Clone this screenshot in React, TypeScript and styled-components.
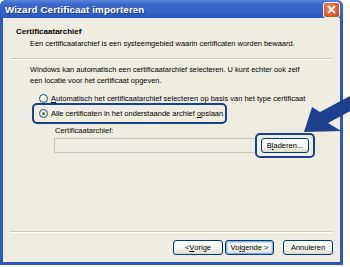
import React from "react";
import styled, { createGlobalStyle } from "styled-components";

const GlobalStyle = createGlobalStyle`
  html, body {
    margin: 0;
    padding: 0;
    background: #ffffff;
  }
  body {
    width: 350px;
    height: 267px;
    overflow: hidden;
    font-family: "Liberation Sans", Arial, sans-serif;
  }
`;

const Stage = styled.div`
  position: relative;
  width: 350px;
  height: 267px;
`;

const Window = styled.div`
  width: 343px;
  height: 265px;
  display: flex;
  flex-direction: column;
  background: #2d58bd;
  border-radius: 6px 6px 0 0;
  overflow: hidden;
`;

const TitleBar = styled.div`
  height: 18px;
  display: flex;
  align-items: center;
  justify-content: space-between;
  padding: 0 3px 0 5px;
  background: linear-gradient(#5a84dc 0%, #3c66c8 25%, #3560c4 70%, #2d58bb 100%);
`;

const Title = styled.span`
  color: #ffffff;
  font-weight: bold;
  font-size: 9.8px;
  letter-spacing: 0.1px;
  text-shadow: 1px 1px 0 #1e3f86;
`;

const CloseButton = styled.div`
  width: 15px;
  height: 14px;
  margin-top: 1px;
  border: 1px solid #ffffff;
  border-radius: 3px;
  background: radial-gradient(circle at 40% 35%, #f0895f 0%, #e05a2c 60%, #c8401c 100%);
  display: flex;
  align-items: center;
  justify-content: center;
`;

const Body = styled.div`
  flex: 1;
  margin: 0 3px 3px 3px;
  background: #efede2;
  display: flex;
  flex-direction: column;
`;

const Header = styled.div`
  height: 40px;
  padding: 9px 0 0 13px;
  box-sizing: border-box;
`;

const HeaderTitle = styled.div`
  font-weight: bold;
  font-size: 8px;
  line-height: 10px;
  color: #000;
`;

const HeaderSub = styled.div`
  font-size: 7.45px;
  line-height: 10px;
  margin: 2px 0 0 14px;
  color: #000;
`;

const Separator = styled.div<{ $inset: number }>`
  height: 1px;
  margin: 0 ${(p) => p.$inset}px;
  background: #d2cfc1;
  border-bottom: 1px solid #ffffff;
`;

const Content = styled.div`
  flex: 1;
  padding: 4px 0 0 27px;
  display: flex;
  flex-direction: column;
`;

const Paragraph = styled.div`
  font-size: 7.45px;
  line-height: 11px;
  color: #000;
`;

const Options = styled.div`
  margin: 7px 0 0 9px;
  display: flex;
  flex-direction: column;
  gap: 4px;
`;

const OptionRow = styled.div`
  display: flex;
  align-items: center;
  gap: 3px;
  height: 11px;
  font-size: 7.5px;
  color: #000;
  position: relative;
  align-self: flex-start;
`;

const Highlight = styled.div`
  position: absolute;
  border: 2px solid #1c3f8e;
  border-radius: 5px;
  pointer-events: none;
`;

const Radio = styled.span<{ $checked?: boolean }>`
  width: 7px;
  height: 7px;
  border-radius: 50%;
  border: 1px solid #1c5180;
  background: radial-gradient(circle, #ffffff 40%, #dcdad0 100%);
  display: flex;
  align-items: center;
  justify-content: center;
  &::after {
    content: "";
    display: ${(p) => (p.$checked ? "block" : "none")};
    width: 3px;
    height: 3px;
    border-radius: 50%;
    background: #3a8a35;
  }
`;

const U = styled.span`
  text-decoration: underline;
  text-underline-offset: 1px;
`;

const StoreBlock = styled.div`
  margin: 7px 0 0 24px;
  display: flex;
  flex-direction: column;
`;

const FieldLabel = styled.div`
  font-size: 7.5px;
  line-height: 10px;
  color: #000;
  margin-left: 1px;
`;

const FieldRow = styled.div`
  display: flex;
  align-items: center;
  margin-top: 2px;
  gap: 5px;
`;

const TextBox = styled.div`
  width: 200px;
  height: 13px;
  border: 1px solid #c9c7ba;
  background: #eeece3;
`;

const Button = styled.div<{ $default?: boolean; $width: number }>`
  position: relative;
  width: ${(p) => p.$width}px;
  height: 15px;
  box-sizing: border-box;
  border: 1px solid #003c74;
  border-radius: 3px;
  background: linear-gradient(#ffffff 0%, #f5f4ee 60%, #dedbcf 100%);
  box-shadow: ${(p) =>
    p.$default ? "inset 0 0 0 1px #8fb1e8, inset 0 0 0 2px #c9d9f5" : "none"};
  display: flex;
  align-items: center;
  justify-content: center;
  font-size: 7.5px;
  color: #000;
`;

const Footer = styled.div`
  height: 29px;
  display: flex;
  align-items: center;
  justify-content: flex-end;
  padding-right: 7px;
  padding-bottom: 1px;
  box-sizing: border-box;
`;

const ButtonPair = styled.div`
  display: flex;
  gap: 2px;
  margin-right: 9px;
`;

const Arrow = styled.svg`
  position: absolute;
  left: 0;
  top: 0;
  pointer-events: none;
`;

export default function App() {
  return (
    <>
      <GlobalStyle />
      <Stage>
        <Window>
          <TitleBar>
            <Title>Wizard Certificaat importeren</Title>
            <CloseButton>
              <svg width="9" height="9" viewBox="0 0 9 9">
                <path d="M1.5 1.5 L7.5 7.5 M7.5 1.5 L1.5 7.5" stroke="#ffffff" strokeWidth="1.8" strokeLinecap="round" />
              </svg>
            </CloseButton>
          </TitleBar>
          <Body>
            <Header>
              <HeaderTitle>Certificaatarchief</HeaderTitle>
              <HeaderSub>Een certificaatarchief is een systeemgebied waarin certificaten worden bewaard.</HeaderSub>
            </Header>
            <Separator $inset={7} />
            <Content>
              <Paragraph>
                Windows kan automatisch een certificaatarchief selecteren. U kunt echter ook zelf
                <br />
                een locatie voor het certificaat opgeven.
              </Paragraph>
              <Options>
                <OptionRow>
                  <Radio />
                  <span>
                    <U>A</U>utomatisch het certificaatarchief selecteren op basis van het type certificaat
                  </span>
                </OptionRow>
                <OptionRow>
                  <Radio $checked />
                  <span>
                    Alle certificaten in het onderstaande archief <U>o</U>pslaan
                  </span>
                  <Highlight style={{ left: -7, right: -4, top: -5, bottom: -5 }} />
                </OptionRow>
              </Options>
              <StoreBlock>
                <FieldLabel>Certificaatarchief:</FieldLabel>
                <FieldRow>
                  <TextBox />
                  <Button $width={48}>
                    B<U>l</U>aderen...
                    <Highlight style={{ left: -7, right: -7, top: -6, bottom: -6 }} />
                  </Button>
                </FieldRow>
              </StoreBlock>
            </Content>
            <Separator $inset={7} />
            <Footer>
              <ButtonPair>
                <Button $width={50}>
                  &lt; <U>V</U>orige
                </Button>
                <Button $width={49} $default>
                  Vo<U>l</U>gende &gt;
                </Button>
              </ButtonPair>
              <Button $width={50}>Annuleren</Button>
            </Footer>
          </Body>
        </Window>
        <Arrow width="350" height="267" viewBox="0 0 350 267">
          <polygon
            points="304,132 312,107 320,112 352,95 358,107 328,123 341,131"
            fill="#1c3f8e"
          />
        </Arrow>
      </Stage>
    </>
  );
}
